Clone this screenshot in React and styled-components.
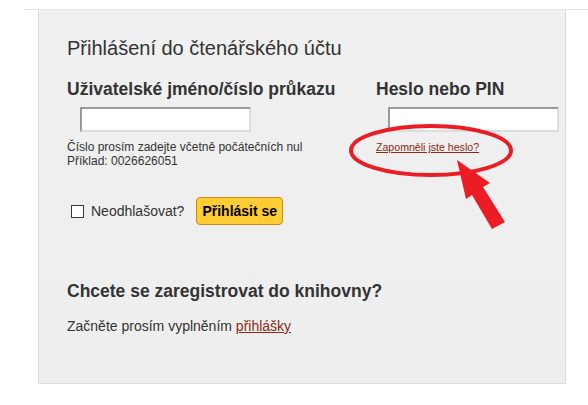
import React from 'react';
import styled, { createGlobalStyle } from 'styled-components';

const GlobalStyle = createGlobalStyle`
    html, body {
        margin: 0;
        padding: 0;
        background: #fff;
    }
    body {
        font-family: "Liberation Sans", Arial, sans-serif;
        color: #333;
    }
`;

const Page = styled.div`
    position: relative;
    width: 588px;
    height: 405px;
    padding: 9px 0 0 24px;
    box-sizing: border-box;
    overflow: hidden;
`;

const TopRule = styled.div`
    border-top: 1px solid #e4e4e4;
`;

const Panel = styled.div`
    margin-left: 14px;
    width: 528px;
    height: 374px;
    box-sizing: border-box;
    border: 1px solid #dcdcdc;
    border-top: none;
    background: linear-gradient(#f0f0f0, #eeeeee);
    padding: 26px 0 0 28px;
`;

const Title = styled.h1`
    margin: 0;
    font-size: 20px;
    line-height: 24px;
    font-weight: normal;
    color: #333;
`;

const Columns = styled.div`
    display: grid;
    grid-template-columns: 309px 1fr;
    margin-top: 19px;
`;

const Field = styled.div`
    display: flex;
    flex-direction: column;
`;

const Label = styled.label`
    font-size: 17.5px;
    line-height: 20px;
    font-weight: bold;
    color: #333;
`;

const TextInput = styled.input`
    box-sizing: border-box;
    width: 171px;
    height: 25px;
    margin: 8px 0 0 ${p => p.indent}px;
    background: #fff;
    border: 2px solid;
    border-color: #999 #ddd #ddd #999;
    padding: 2px 4px;
    font-family: inherit;
    font-size: 13px;
`;

const Hint = styled.div`
    margin-top: 8px;
    font-size: 12px;
    line-height: 14px;
    color: #333;
`;

const SmallLink = styled.a`
    margin-top: 8px;
    font-size: 10.6px;
    line-height: 14px;
    color: #8b2a10;
    text-decoration: underline;
    align-self: flex-start;
`;

const LoginRow = styled.div`
    display: flex;
    align-items: center;
    margin-top: 29px;
    height: 28px;
`;

const Check = styled.input`
    appearance: none;
    box-sizing: border-box;
    width: 13px;
    height: 13px;
    margin: 0 7px 0 4px;
    border: 1px solid #3a3a3a;
    background: #fff;
    border-radius: 0;
`;

const CheckLabel = styled.span`
    font-size: 14px;
    color: #333;
    margin-right: 12px;
`;

const Button = styled.button`
    box-sizing: border-box;
    height: 28px;
    padding: 0 5px;
    background: #ffcc33;
    border: 1px solid #c98a1c;
    border-radius: 4px;
    font-family: inherit;
    font-size: 14px;
    font-weight: bold;
    color: #000;
`;

const SubHeading = styled.h2`
    margin: 56px 0 0;
    font-size: 17.5px;
    line-height: 20px;
    font-weight: bold;
    color: #333;
`;

const Text = styled.p`
    margin: 17px 0 0;
    font-size: 14px;
    line-height: 17px;
    color: #333;
`;

const TextLink = styled.a`
    color: #8b2a10;
    text-decoration: underline;
`;

const Annotation = styled.svg`
    position: absolute;
    top: 0;
    left: 0;
    pointer-events: none;
`;

export default function App() {
    return (
        <>
            <GlobalStyle />
            <Page>
                <TopRule />
                <Panel>
                    <Title>Přihlášení do čtenářského účtu</Title>
                    <Columns>
                        <Field>
                            <Label htmlFor="user">Uživatelské jméno/číslo průkazu</Label>
                            <TextInput id="user" type="text" indent={13} />
                            <Hint>
                                Číslo prosím zadejte včetně počátečních nul<br />
                                Příklad: 0026626051
                            </Hint>
                        </Field>
                        <Field>
                            <Label htmlFor="pin">Heslo nebo PIN</Label>
                            <TextInput id="pin" type="password" indent={12} />
                            <SmallLink href="#">Zapomněli jste heslo?</SmallLink>
                        </Field>
                    </Columns>
                    <LoginRow>
                        <Check type="checkbox" id="stay" />
                        <CheckLabel>Neodhlašovat?</CheckLabel>
                        <Button type="button">Přihlásit se</Button>
                    </LoginRow>
                    <SubHeading>Chcete se zaregistrovat do knihovny?</SubHeading>
                    <Text>
                        Začněte prosím vyplněním <TextLink href="#">přihlášky</TextLink>
                    </Text>
                </Panel>
                <Annotation width="588" height="405" viewBox="0 0 588 405">
                    <ellipse cx="431" cy="150.5" rx="80" ry="24.5" fill="none" stroke="#ec1c24" strokeWidth="4" />
                    <polygon points="457,160 490,183 483,187 505,222 492,229 472,195 466,199" fill="#ec1c24" />
                </Annotation>
            </Page>
        </>
    );
}
